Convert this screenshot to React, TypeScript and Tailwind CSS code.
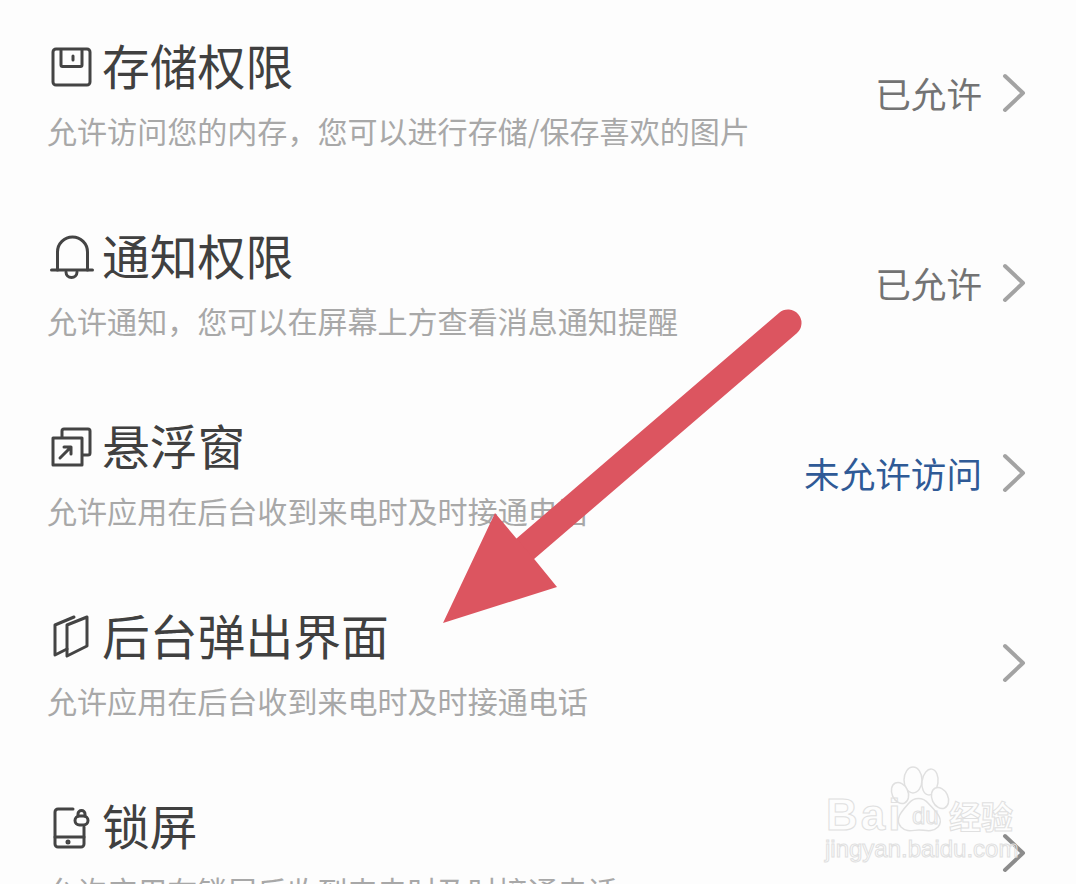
const font = "[font-family:'Noto_Sans_CJK_SC','Noto_Sans',sans-serif]";

function Icon({ children }: { children: React.ReactNode }) {
  return (
    <svg width="44" height="48" viewBox="0 0 44 48" fill="none" stroke="#444444" strokeWidth="3" strokeLinecap="round" strokeLinejoin="round" className="shrink-0 overflow-visible">
      {children}
    </svg>
  );
}

const SaveIcon = () => (
  <Icon>
    <rect x="3" y="4" width="37" height="36" rx="3" />
    <path d="M11 5V20a1.5 1.5 0 0 0 1.5 1.5H30.500a1.500 1.500 0 0 0 1.500-1.500V5" />
    <path d="M23 11V15" />
  </Icon>
);
const BellIcon = () => (
  <Icon>
    <path d="M1.500 35H42.500" />
    <path d="M7.500 35V17a15 15 0 0 1 30 0V35" />
    <path d="M16 37a5.500 5.500 0 0 0 11 0" />
  </Icon>
);
const FloatIcon = () => (
  <Icon>
    <rect x="3" y="13" width="29" height="27" />
    <path d="M12 12V6a2 2 0 0 1 2-2H38a2 2 0 0 1 2 2V28a2 2 0 0 1-2 2H33" />
    <path d="M10 33L21 22M14 22H21V29" />
  </Icon>
);
const BookIcon = () => (
  <Icon>
    <path d="M17 10L37 2V31L17 41Z" />
    <path d="M24 2L5 10V40L17 34" />
  </Icon>
);
const LockIcon = () => (
  <Icon>
    <path d="M23 4H8a3 3 0 0 0-3 3V39a3 3 0 0 0 3 3H31a3 3 0 0 0 3-3V22" />
    <path d="M5 32H34" />
    <circle cx="18" cy="37" r="1" fill="#444444" />
    <rect x="25" y="11" width="13" height="9" rx="4.500" />
    <path d="M28 11V9a3.500 3.500 0 0 1 7 0V11" />
  </Icon>
);

function Chevron({ dark }: { dark?: boolean }) {
  return (
    <svg width="24" height="40" viewBox="0 0 24 40" fill="none" stroke={dark ? "#8c8c8c" : "#a3a3a3"} strokeWidth="4" strokeLinecap="round" strokeLinejoin="round" className="shrink-0">
      <path d="M3 3L21 20L3 37" />
    </svg>
  );
}

type Row = { icon: React.ReactNode; title: string; sub: string; status?: string; link?: boolean; dark?: boolean };

const rows: Row[] = [
  { icon: <SaveIcon />, title: "存储权限", sub: "允许访问您的内存，您可以进行存储/保存喜欢的图片", status: "已允许" },
  { icon: <BellIcon />, title: "通知权限", sub: "允许通知，您可以在屏幕上方查看消息通知提醒", status: "已允许" },
  { icon: <FloatIcon />, title: "悬浮窗", sub: "允许应用在后台收到来电时及时接通电话", status: "未允许访问", link: true },
  { icon: <BookIcon />, title: "后台弹出界面", sub: "允许应用在后台收到来电时及时接通电话" },
  { icon: <LockIcon />, title: "锁屏", sub: "允许应用在锁屏后收到来电时及时接通电话", dark: true },
];

function Watermark() {
  return (
    <div className="absolute left-[820px] top-[765px] w-[200px] h-[100px] text-transparent [-webkit-text-stroke:1px_#e0e0e0] [font-family:'Liberation_Sans',sans-serif]">
      <svg width="200" height="70" viewBox="0 0 200 70" fill="#fdfdfd" stroke="#e0e0e0" strokeWidth="1.500" className="absolute left-0 top-0">
        <ellipse cx="93" cy="15" rx="9" ry="13" />
        <ellipse cx="110" cy="17" rx="8" ry="13" transform="rotate(8 110 17)" />
        <ellipse cx="80" cy="28" rx="8" ry="11" transform="rotate(-25 80 28)" />
        <ellipse cx="120" cy="33" rx="8" ry="11" transform="rotate(-25 120 33)" />
        <path d="M81 62C74 54 82 46 89 38C94 32 103 32 108 38C115 46 125 54 118 62C112 68 105 65 99 65C93 65 87 68 81 62Z" />
      </svg>
      <span className="absolute left-[6px] top-[25px] text-[44px] leading-[50px] font-bold tracking-[3px]">Bai</span>
      <span className="absolute left-[92px] top-[37px] text-[24px] leading-[28px]">du</span>
      <span className={`absolute left-[129px] top-[30px] text-[32px] leading-[40px] font-bold ${font}`}>经验</span>
      <span className="absolute left-[5px] top-[70px] text-[24px] leading-[28px]">jingyan.baidu.com</span>
    </div>
  );
}

export default function App() {
  return (
    <div className={`relative w-[1076px] h-[884px] overflow-hidden bg-[#fdfdfd] ${font}`}>
      <div className="flex flex-col -mt-[2px]">
        {rows.map((r) => (
          <div key={r.title} className="flex items-center justify-between h-[190px] shrink-0 pl-[47px] pr-[50px]">
            <div className="flex flex-col">
              <div className="flex items-center gap-[8px] pl-[3px] h-[64px]">
                {r.icon}
                <span className="text-[47.8px] leading-[64px] mb-[7px] text-[#404040]">{r.title}</span>
              </div>
              <div className="text-[30.05px] leading-[40px] mt-[9px] text-[#a8a8a8] whitespace-nowrap">{r.sub}</div>
            </div>
            <div className="flex items-center gap-[20px]">
              {r.status && (
                <span className={`text-[35.6px] leading-[48px] ${r.link ? "text-[#2f5a96]" : "text-[#737373]"}`}>{r.status}</span>
              )}
              <Chevron dark={r.dark} />
            </div>
          </div>
        ))}
      </div>
      <svg width="1076" height="884" viewBox="0 0 1076 884" className="absolute left-0 top-0 pointer-events-none">
        <path d="M788 323L525 549" stroke="#dc5560" strokeWidth="27" strokeLinecap="round" fill="none" />
        <polygon points="443,623 495,513 516,538 535,560 557,587" fill="#dc5560" />
      </svg>
      <Watermark />
    </div>
  );
}
